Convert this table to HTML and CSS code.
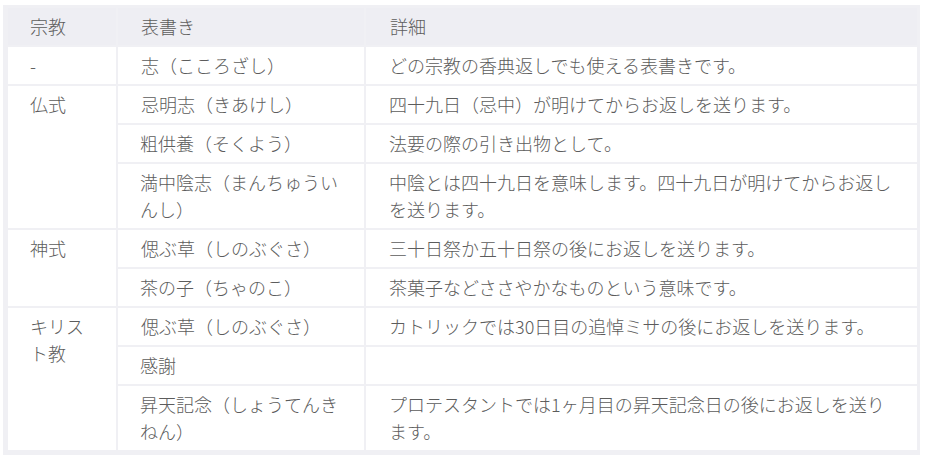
FILE: index.html
```html
<!DOCTYPE html>
<html lang="ja">
<head>
<meta charset="utf-8">
<link rel="stylesheet" href="styles.css">
</head>
<body>
<div class="wrap">
<table class="tbl">
<colgroup><col class="c1"><col class="c2"><col class="c3"></colgroup>
<thead>
<tr><th>宗教</th><th>表書き</th><th>詳細</th></tr>
</thead>
<tbody>
<tr><td>-</td><td>志（こころざし）</td><td>どの宗教の香典返しでも使える表書きです。</td></tr>
<tr><td rowspan="3">仏式</td><td>忌明志（きあけし）</td><td>四十九日（忌中）が明けてからお返しを送ります。</td></tr>
<tr><td>粗供養（そくよう）</td><td>法要の際の引き出物として。</td></tr>
<tr><td>満中陰志（まんちゅういんし）</td><td>中陰とは四十九日を意味します。四十九日が明けてからお返しを送ります。</td></tr>
<tr><td rowspan="2">神式</td><td>偲ぶ草（しのぶぐさ）</td><td>三十日祭か五十日祭の後にお返しを送ります。</td></tr>
<tr><td>茶の子（ちゃのこ）</td><td>茶菓子などささやかなものという意味です。</td></tr>
<tr><td rowspan="3">キリスト教</td><td>偲ぶ草（しのぶぐさ）</td><td>カトリックでは30日目の追悼ミサの後にお返しを送ります。</td></tr>
<tr><td>感謝</td><td></td></tr>
<tr><td>昇天記念（しょうてんきねん）</td><td>プロテスタントでは1ヶ月目の昇天記念日の後にお返しを送ります。</td></tr>
</tbody>
</table>
</div>
</body>
</html>
```
FILE: styles.css
```css
html, body {
  margin: 0;
  padding: 0;
  background: #ffffff;
}
.wrap {
  padding: 5px 0 0 3px;
}
.tbl {
  border-collapse: separate;
  border-spacing: 2px;
  padding: 1px 1px 3px 3px;
  background: #f0f0f4;
  width: 917px;
  table-layout: fixed;
  font-family: "Noto Sans CJK JP", "Noto Sans", sans-serif;
  font-size: 18px;
  font-weight: 300;
  line-height: 27px;
  color: #5c5c5c;
}
.c1 { width: 108px; }
.c2 { width: 246px; }
.c3 { width: 551px; }
.tbl th {
  background: #eeeef3;
  font-weight: 300;
  text-align: left;
  padding: 5px 23px 5px 22px;
}
.tbl td {
  background: #ffffff;
  padding: 5px 23px 5px 23px;
  vertical-align: top;
}
.tbl td:first-child {
  padding-left: 22px;
}
.tbl th:nth-child(2), .tbl td:nth-child(2) {
  padding-left: 23px;
}
.tbl th:nth-child(3) {
  padding-left: 24px;
}
```
